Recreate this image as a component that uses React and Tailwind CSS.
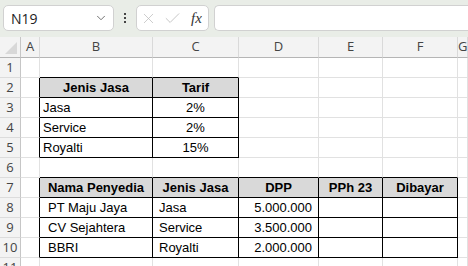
import { Fragment } from 'react'
import { ChevronDown, X, Check } from 'lucide-react'

const cols = ['A', 'B', 'C', 'D', 'E', 'F', 'G']

// cell content: [text, align, bold, header-fill]
const data = {
  2: { B: ['Jenis Jasa', 'center', true, true], C: ['Tarif', 'center', true, true] },
  3: { B: ['Jasa', 'left'], C: ['2%', 'center'] },
  4: { B: ['Service', 'left'], C: ['2%', 'center'] },
  5: { B: ['Royalti', 'left'], C: ['15%', 'center'] },
  7: {
    B: ['Nama Penyedia', 'center', true, true],
    C: ['Jenis Jasa', 'center', true, true],
    D: ['DPP', 'center', true, true],
    E: ['PPh 23', 'center', true, true],
    F: ['Dibayar', 'center', true, true],
  },
  8: { B: ['PT Maju Jaya', 'indent'], C: ['Jasa', 'indent2'], D: ['5.000.000', 'right'], E: [''], F: [''] },
  9: { B: ['CV Sejahtera', 'indent'], C: ['Service', 'indent2'], D: ['3.500.000', 'right'], E: [''], F: [''] },
  10: { B: ['BBRI', 'indent'], C: ['Royalti', 'indent2'], D: ['2.000.000', 'right'], E: [''], F: [''] },
}

const inT1 = (r, c) => r >= 2 && r <= 5 && (c === 'B' || c === 'C')
const inT2 = (r, c) => r >= 7 && r <= 10 && 'BCDEF'.includes(c)
const inTable = (r, c) => inT1(r, c) || inT2(r, c)

const nextCol = (c) => cols[cols.indexOf(c) + 1]

const Cell = ({ r, c }) => {
  const cell = data[r]?.[c]
  const blackR = inTable(r, c) || inTable(r, nextCol(c))
  const blackB = inTable(r, c) || inTable(r + 1, c)
  const align = cell?.[1]
  const justify =
    align === 'center' ? 'justify-center' :
    align === 'right' ? 'justify-end pr-[6px]' :
    align === 'indent' ? 'justify-start pl-[8px]' :
    align === 'indent2' ? 'justify-start pl-[6px]' :
    'justify-start pl-[3px]'
  return (
    <div
      className={
        'h-[20px] border-r border-b flex items-center overflow-hidden whitespace-nowrap text-[13px] text-black pt-[1px] ' +
        (blackR ? 'border-r-black ' : 'border-r-[#e1e1e1] ') +
        (blackB ? 'border-b-black ' : 'border-b-[#e1e1e1] ') +
        (cell?.[3] ? 'bg-[#d9d9d9] ' : 'bg-white ') +
        (cell?.[2] ? 'font-bold ' : '') +
        justify
      }
    >
      {cell?.[0]}
    </div>
  )
}

const App = () => {
  const rows = [1, 2, 3, 4, 5, 6, 7, 8, 9, 10, 11]
  return (
    <div className="w-[468px] h-[266px] overflow-hidden bg-white font-['Liberation_Sans',sans-serif]">
      {/* formula bar */}
      <div className="h-[37px] bg-[#e9ede7] flex items-start pt-[5px] pl-[3px]">
        <div className="w-[111px] h-[26px] bg-white border border-[#d1d1d1] rounded-[5px] flex items-center pl-[7px] pr-[5px] justify-between">
          <span className="text-[14px] text-[#222] font-['Open_Sans',sans-serif]">N19</span>
          <ChevronDown size={14} strokeWidth={1.4} className="text-[#555]" />
        </div>
        <div className="w-[22px] h-[26px] flex flex-col items-center justify-center gap-[2px]">
          <div className="w-[2px] h-[2px] bg-[#444]" />
          <div className="w-[2px] h-[2px] bg-[#444]" />
          <div className="w-[2px] h-[2px] bg-[#444]" />
        </div>
        <div className="w-[73px] h-[26px] bg-white border border-[#d1d1d1] rounded-[5px] flex items-center pl-[3px] gap-[6px]">
          <X size={17} strokeWidth={1} className="text-[#b8b8b8]" />
          <Check size={19} strokeWidth={1} className="text-[#b8b8b8]" />
          <span className="ml-[3px] text-[15px] italic text-[#333] font-['Liberation_Serif',serif] leading-none">fx</span>
        </div>
        <div className="ml-[5px] flex-1 h-[26px] bg-white border border-[#d1d1d1] rounded-l-[5px] border-r-0" />
      </div>

      {/* sheet */}
      <div className="grid grid-cols-[21px_19px_113px_86px_80px_64px_75px_1fr]">
        <div className="h-[21px] bg-[#f3f3f3] border-r border-b border-r-[#c6c6c6] border-b-[#b5b5b5] relative">
          <div className="absolute right-[3px] bottom-[3px] w-0 h-0 border-l-[12px] border-l-transparent border-b-[12px] border-b-[#d8d8d8]" />
        </div>
        {cols.map((c) => (
          <div
            key={c}
            className="h-[21px] bg-[#f3f3f3] border-r border-b border-r-[#d9d9d9] border-b-[#b5b5b5] flex items-center justify-center text-[13px] text-[#444] font-['Open_Sans',sans-serif]"
          >
            {c}
          </div>
        ))}
        {rows.map((r) => (
          <Fragment key={r}>
            <div className="h-[20px] bg-[#f3f3f3] border-r border-b border-r-[#c6c6c6] border-b-[#dcdcdc] flex items-center justify-center text-[13px] text-[#444] font-['Open_Sans',sans-serif]">
              {r}
            </div>
            {cols.map((c) => (
              <Cell key={c} r={r} c={c} />
            ))}
          </Fragment>
        ))}
      </div>
    </div>
  )
}

export default App
